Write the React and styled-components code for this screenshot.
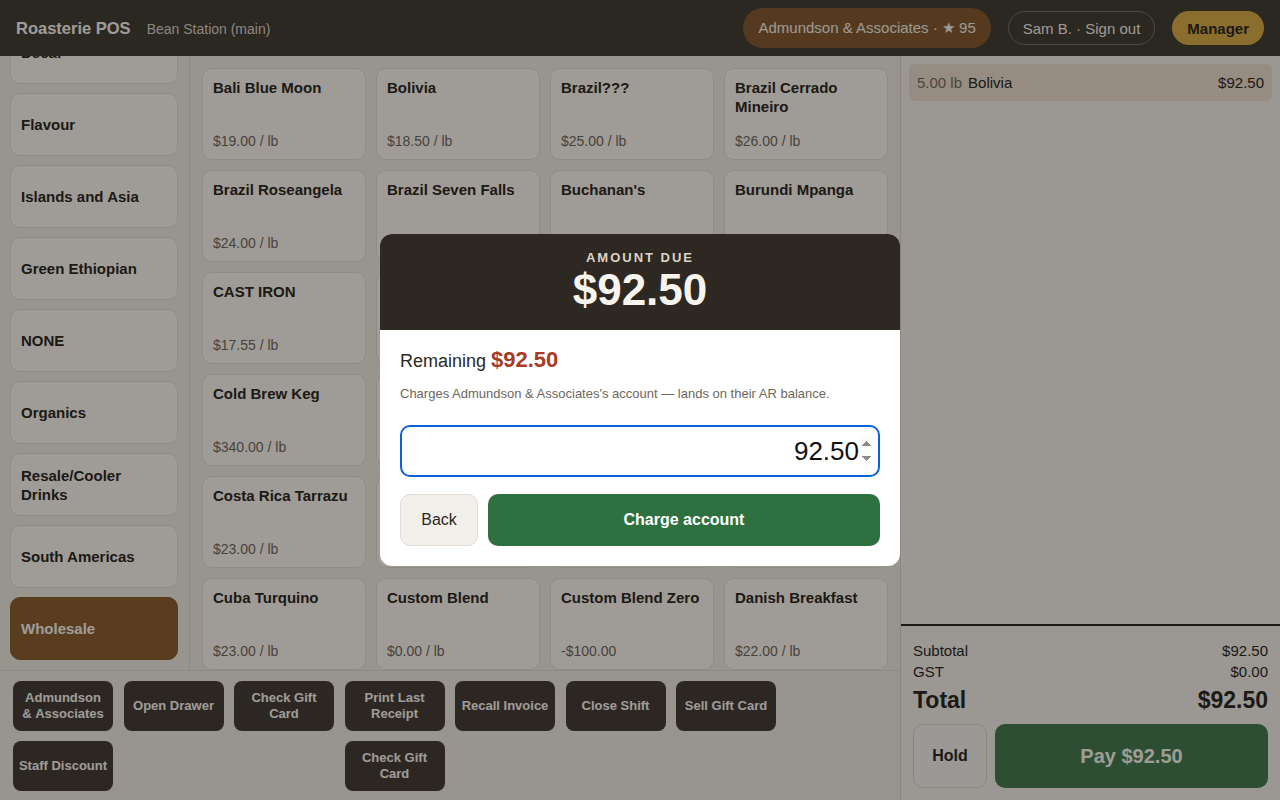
import React from 'react'
import styled, { createGlobalStyle } from 'styled-components'

const GlobalStyle = createGlobalStyle`
    * { box-sizing: border-box; }
    html, body { margin: 0; padding: 0; }
    body {
        font-family: "Liberation Sans", Arial, sans-serif;
        background: #eae4da;
        color: #2d2822;
        overflow: hidden;
    }
`

const Shell = styled.div`
    width: 1280px;
    height: 800px;
    display: grid;
    grid-template-rows: 56px 1fr;
    grid-template-columns: 900px 1fr;
`

const TopBar = styled.header`
    grid-column: 1 / 3;
    display: flex;
    align-items: center;
    justify-content: space-between;
    padding: 0 16px;
    background-color: #433c34;
    color: #f5f0e8;
`

const Brand = styled.div`
    display: flex;
    align-items: baseline;
    gap: 16px;
`

const Title = styled.span`
    font-size: 16.5px;
    font-weight: bold;
`

const Store = styled.span`
    font-size: 14px;
    color: #d6cfc4;
`

const TopRight = styled.div`
    display: flex;
    align-items: center;
    gap: 17px;
`

const Pill = styled.button`
    font-family: inherit;
    border-radius: 20px;
    font-size: 15px;
    padding: 0 14px;
    height: ${p => p.tall ? '40px' : '34px'};
    border: 1px solid ${p => p.outline ? '#7a7168' : 'transparent'};
    background-color: ${p => p.bg || 'transparent'};
    color: ${p => p.dark ? '#2d2822' : '#f0ebe3'};
    font-weight: ${p => p.bold ? 'bold' : 'normal'};
`

const Main = styled.div`
    display: grid;
    grid-template-columns: 190px 1fr;
    grid-template-rows: 614px 130px;
    overflow: hidden;
`

const Sidebar = styled.div`
    border-right: 1px solid #ddd5ca;
    overflow: hidden;
    padding: 0 11px 0 10px;
`

const CatList = styled.div`
    display: flex;
    flex-direction: column;
    gap: 9px;
    margin-top: -35px;
`

const Category = styled.button`
    font-family: inherit;
    height: 63px;
    text-align: left;
    padding: 0 10px;
    border-radius: 10px;
    font-size: 15px;
    font-weight: bold;
    line-height: 19px;
    border: 1px solid ${p => p.active ? '#8a5c31' : '#e0d6c9'};
    background-color: ${p => p.active ? '#8a5c31' : '#f5f0e8'};
    color: ${p => p.active ? '#f5f0e8' : '#2d2822'};
`

const Products = styled.div`
    overflow: hidden;
    padding: 12px 12px 0 12px;
`

const Grid = styled.div`
    display: grid;
    grid-template-columns: repeat(4, 164px);
    grid-auto-rows: 92px;
    gap: 10px;
`

const Card = styled.div`
    border-radius: 10px;
    border: 1px solid #e0d6c9;
    background-color: #f5f0e8;
    padding: 9px 10px 10px 10px;
    display: flex;
    flex-direction: column;
    justify-content: space-between;
`

const CardName = styled.div`
    font-size: 15px;
    font-weight: bold;
    line-height: 19px;
`

const CardPrice = styled.div`
    font-size: 14px;
    color: #6f665c;
`

const ActionBar = styled.div`
    grid-column: 1 / 3;
    border-top: 1px solid #ddd5ca;
    padding: 10px 13px;
    display: grid;
    grid-template-columns: repeat(7, 100px);
    grid-auto-rows: 50px;
    column-gap: 10.5px;
    row-gap: 10px;
`

const Action = styled.button`
    font-family: inherit;
    border: none;
    border-radius: 8px;
    background-color: #443d36;
    color: #f5f0e8;
    font-size: 13px;
    font-weight: bold;
    line-height: 16px;
    padding: 0 4px;
    visibility: ${p => p.empty ? 'hidden' : 'visible'};
`

const Cart = styled.aside`
    border-left: 1px solid #d4ccc0;
    background-color: #eeeae4;
    display: flex;
    flex-direction: column;
`

const Lines = styled.div`
    flex: 1;
    padding: 8px 8px;
`

const Line = styled.div`
    display: flex;
    align-items: center;
    height: 37px;
    padding: 0 8px;
    border-radius: 6px;
    background-color: #e6d8c6;
    font-size: 15px;
    gap: 6px;
`

const Qty = styled.span`
    color: #746a5e;
`

const LinePrice = styled.span`
    margin-left: auto;
`

const Totals = styled.div`
    border-top: 2px solid #2d2822;
    padding: 14px 12px 12px 12px;
`

const TotalRow = styled.div`
    display: flex;
    justify-content: space-between;
    font-size: ${p => p.big ? '23px' : '15px'};
    font-weight: ${p => p.big ? 'bold' : 'normal'};
    line-height: ${p => p.big ? '30px' : '21px'};
    margin-top: ${p => p.big ? '3px' : '0'};
`

const CartButtons = styled.div`
    display: flex;
    gap: 8px;
    margin-top: 9px;
`

const HoldButton = styled.button`
    font-family: inherit;
    width: 74px;
    height: 64px;
    border-radius: 10px;
    border: 1px solid #d7cdbf;
    background-color: #efebe5;
    color: #2d2822;
    font-size: 16px;
    font-weight: bold;
`

const PayButton = styled.button`
    font-family: inherit;
    flex: 1;
    height: 64px;
    border-radius: 10px;
    border: none;
    background-color: #46784d;
    color: #f5f0e8;
    font-size: 20px;
    font-weight: bold;
`

const Overlay = styled.div`
    position: fixed;
    inset: 0;
    background-color: rgba(0, 0, 0, 0.35);
    display: flex;
    align-items: center;
    justify-content: center;
`

const Modal = styled.div`
    width: 520px;
    border-radius: 12px;
    overflow: hidden;
    background-color: #ffffff;
`

const ModalHead = styled.div`
    background-color: #2d2822;
    height: 96px;
    display: flex;
    flex-direction: column;
    align-items: center;
    padding-top: 16px;
`

const DueLabel = styled.div`
    font-size: 13px;
    font-weight: bold;
    letter-spacing: 2px;
    color: #ddd3c6;
    line-height: 16px;
`

const DueAmount = styled.div`
    font-size: 44px;
    font-weight: bold;
    color: #f7f3ed;
    line-height: 48px;
`

const ModalBody = styled.div`
    padding: 17px 20px 20px 20px;
`

const Remaining = styled.div`
    font-size: 18px;
    line-height: 26px;
    color: #2d2822;
`

const RemainingValue = styled.span`
    color: #a83a28;
    font-size: 22px;
    font-weight: bold;
`

const Note = styled.div`
    font-size: 13px;
    color: #6f665c;
    margin-top: 12px;
`

const AmountInput = styled.input`
    display: block;
    width: 100%;
    height: 52px;
    margin-top: 24px;
    border: 2px solid #0b62d6;
    border-radius: 10px;
    font-family: inherit;
    font-size: 26px;
    text-align: right;
    padding: 0 4px 0 12px;
    color: #111;
    outline: none;
`

const ModalButtons = styled.div`
    display: flex;
    gap: 10px;
    margin-top: 17px;
`

const BackButton = styled.button`
    font-family: inherit;
    width: 78px;
    height: 52px;
    border-radius: 10px;
    border: 1px solid #e3dcd2;
    background-color: #f3f0eb;
    color: #2d2822;
    font-size: 16px;
`

const ChargeButton = styled.button`
    font-family: inherit;
    flex: 1;
    height: 52px;
    border-radius: 10px;
    border: none;
    background-color: #2e7040;
    color: #ffffff;
    font-size: 16px;
    font-weight: bold;
`

const categories = [
    'Decaf', 'Flavour', 'Islands and Asia', 'Green Ethiopian', 'NONE',
    'Organics', 'Resale/Cooler Drinks', 'South Americas', 'Wholesale'
]

const products = [
    ['Bali Blue Moon', '$19.00 / lb'],
    ['Bolivia', '$18.50 / lb'],
    ['Brazil???', '$25.00 / lb'],
    ['Brazil Cerrado Mineiro', '$26.00 / lb'],
    ['Brazil Roseangela', '$24.00 / lb'],
    ['Brazil Seven Falls', '$22.00 / lb'],
    ["Buchanan's", '$21.00 / lb'],
    ['Burundi Mpanga', '$23.00 / lb'],
    ['CAST IRON', '$17.55 / lb'],
    ['Chiapas', '$20.00 / lb'],
    ['Colombia', '$21.00 / lb'],
    ['Colombia Decaf', '$22.00 / lb'],
    ['Cold Brew Keg', '$340.00 / lb'],
    ['Congo', '$22.00 / lb'],
    ['Costa Rica', '$23.00 / lb'],
    ['Cowboy Blend', '$19.00 / lb'],
    ['Costa Rica Tarrazu', '$23.00 / lb'],
    ['Cuba', '$24.00 / lb'],
    ['Cuba Serrano', '$24.00 / lb'],
    ['Cuba Organic', '$24.00 / lb'],
    ['Cuba Turquino', '$23.00 / lb'],
    ['Custom Blend', '$0.00 / lb'],
    ['Custom Blend Zero', '-$100.00'],
    ['Danish Breakfast', '$22.00 / lb'],
]

const actions = [
    'Admundson &\u00a0Associates', 'Open Drawer', 'Check Gift Card', 'Print Last Receipt',
    'Recall Invoice', 'Close Shift', 'Sell Gift Card',
    'Staff Discount', '', '', 'Check Gift Card'
]

export default function App() {
    return (
        <>
            <GlobalStyle />
            <Shell>
                <TopBar>
                    <Brand>
                        <Title>Roasterie POS</Title>
                        <Store>Bean Station (main)</Store>
                    </Brand>
                    <TopRight>
                        <Pill tall bg="#835a31">Admundson &amp; Associates · ★ 95</Pill>
                        <Pill outline>Sam B. · Sign out</Pill>
                        <Pill bg="#d6aa46" dark bold>Manager</Pill>
                    </TopRight>
                </TopBar>
                <Main>
                    <Sidebar>
                        <CatList>
                            {categories.map(c => (
                                <Category key={c} active={c === 'Wholesale'}>{c}</Category>
                            ))}
                        </CatList>
                    </Sidebar>
                    <Products>
                        <Grid>
                            {products.map(([name, price]) => (
                                <Card key={name}>
                                    <CardName>{name}</CardName>
                                    <CardPrice>{price}</CardPrice>
                                </Card>
                            ))}
                        </Grid>
                    </Products>
                    <ActionBar>
                        {actions.map((a, i) => (
                            <Action key={i} empty={!a}>{a}</Action>
                        ))}
                    </ActionBar>
                </Main>
                <Cart>
                    <Lines>
                        <Line>
                            <Qty>5.00 lb</Qty>
                            <span>Bolivia</span>
                            <LinePrice>$92.50</LinePrice>
                        </Line>
                    </Lines>
                    <Totals>
                        <TotalRow><span>Subtotal</span><span>$92.50</span></TotalRow>
                        <TotalRow><span>GST</span><span>$0.00</span></TotalRow>
                        <TotalRow big><span>Total</span><span>$92.50</span></TotalRow>
                        <CartButtons>
                            <HoldButton>Hold</HoldButton>
                            <PayButton>Pay $92.50</PayButton>
                        </CartButtons>
                    </Totals>
                </Cart>
            </Shell>
            <Overlay>
                <Modal>
                    <ModalHead>
                        <DueLabel>AMOUNT DUE</DueLabel>
                        <DueAmount>$92.50</DueAmount>
                    </ModalHead>
                    <ModalBody>
                        <Remaining>Remaining <RemainingValue>$92.50</RemainingValue></Remaining>
                        <Note>Charges Admundson &amp; Associates's account — lands on their AR balance.</Note>
                        <AmountInput type="number" step="0.01" defaultValue="92.50" autoFocus />
                        <ModalButtons>
                            <BackButton>Back</BackButton>
                            <ChargeButton>Charge account</ChargeButton>
                        </ModalButtons>
                    </ModalBody>
                </Modal>
            </Overlay>
        </>
    )
}
